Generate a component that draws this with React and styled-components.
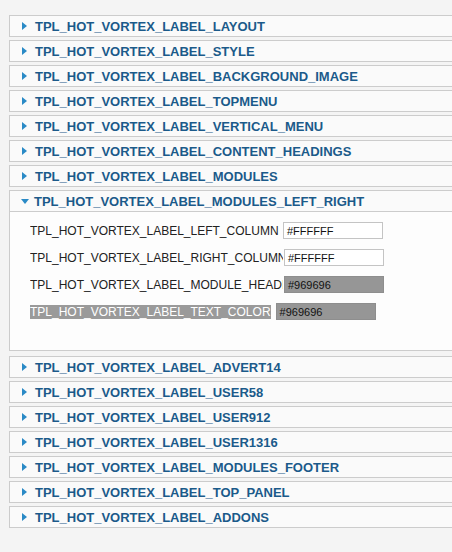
import styled, { createGlobalStyle } from "styled-components";

const GlobalStyle = createGlobalStyle`
    html, body {
        margin: 0;
        padding: 0;
        background: #f4f4f4;
        overflow: hidden;
    }
    body {
        font-family: "Liberation Sans", Arial, sans-serif;
    }
`

const Page = styled.div`
    padding: 15px 0 0 9px;
    width: 470px;
`

const Panel = styled.div`
    margin-bottom: ${props => (props.$open ? "5px" : "3px")};
`

const Header = styled.div`
    height: 20px;
    display: flex;
    align-items: center;
    background: #fafafa;
    border: 1px solid #cccccc;
    color: #1b5a8a;
    font-size: 13px;
    font-weight: 700;
    padding-left: 11px;
`

const Arrow = styled.span`
    width: 0;
    height: 0;
    border-style: solid;
    border-color: transparent;
    &.closed {
        border-width: 4px 0 4px 5px;
        border-left-color: #2a8ac6;
        margin-left: 1px;
        margin-right: 8px;
    }
    &.open {
        border-width: 5px 4px 0 4px;
        border-top-color: #2a8ac6;
        margin-right: 5px;
    }
`

const Content = styled.div`
    background: #fdfdfd;
    border: 1px solid #cccccc;
    border-top: none;
    padding: 10px 0 30px 20px;
    display: flex;
    flex-direction: column;
    gap: 10px;
`

const Row = styled.div`
    display: flex;
    align-items: center;
    height: 17px;
`

const Label = styled.span`
    font-size: 12px;
    color: #222;
    white-space: nowrap;
    overflow: hidden;
    flex-shrink: 0;
    width: ${props => (props.$fit ? "auto" : "253px")};
    margin-right: ${props => (props.$fit ? "5px" : "0")};
    &.selected {
        background: #9a9a9a;
        color: #ffffff;
    }
`

const ColorInput = styled.div`
    width: 95px;
    height: 15px;
    border: 1px solid #c4c4c4;
    background: ${props => props.$bg};
    font-size: 11px;
    color: #111;
    padding-left: 3px;
    display: flex;
    align-items: center;
    &.dark {
        border-color: #8e8e8e;
    }
`

const before = [
    "LAYOUT",
    "STYLE",
    "BACKGROUND_IMAGE",
    "TOPMENU",
    "VERTICAL_MENU",
    "CONTENT_HEADINGS",
    "MODULES",
];

const after = [
    "ADVERT14",
    "USER58",
    "USER912",
    "USER1316",
    "MODULES_FOOTER",
    "TOP_PANEL",
    "ADDONS",
];

const fields = [
    { label: "LEFT_COLUMN", value: "#FFFFFF", bg: "#ffffff", shift: 0 },
    { label: "RIGHT_COLUMN", value: "#FFFFFF", bg: "#ffffff", shift: 1 },
    { label: "MODULE_HEADING_COLOR", value: "#969696", bg: "#969696", shift: 1 },
    { label: "TEXT_COLOR", value: "#969696", bg: "#969696", fit: true },
];

const ClosedPanel = ({ name }) => (
    <Panel>
        <Header>
            <Arrow className="closed" />
            TPL_HOT_VORTEX_LABEL_{name}
        </Header>
    </Panel>
);

const App = () => {
    return (
        <Page>
            <GlobalStyle />
            {before.map(name => <ClosedPanel key={name} name={name} />)}
            <Panel $open>
                <Header>
                    <Arrow className="open" />
                    TPL_HOT_VORTEX_LABEL_MODULES_LEFT_RIGHT
                </Header>
                <Content>
                    {fields.map(f => (
                        <Row key={f.label}>
                            <Label $fit={f.fit} className={f.fit ? "selected" : ""}>
                                TPL_HOT_VORTEX_LABEL_{f.label}
                            </Label>
                            <ColorInput
                                $bg={f.bg}
                                className={f.bg !== "#ffffff" ? "dark" : ""}
                                style={{ marginLeft: f.shift || 0 }}
                            >
                                {f.value}
                            </ColorInput>
                        </Row>
                    ))}
                </Content>
            </Panel>
            {after.map(name => <ClosedPanel key={name} name={name} />)}
        </Page>
    );
}

export default App;
